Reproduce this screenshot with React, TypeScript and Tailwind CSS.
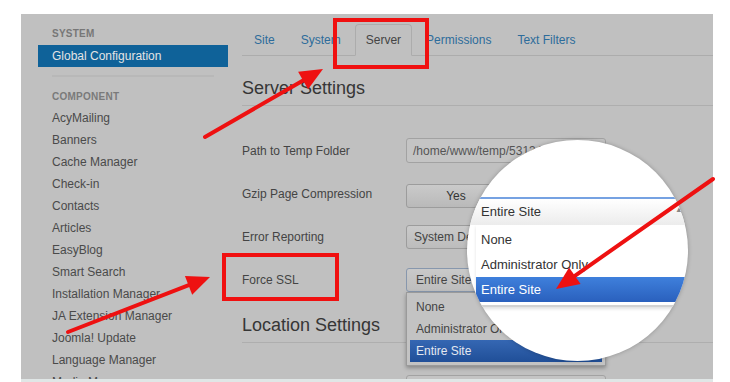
const components = [
  'AcyMailing',
  'Banners',
  'Cache Manager',
  'Check-in',
  'Contacts',
  'Articles',
  'EasyBlog',
  'Smart Search',
  'Installation Manager',
  'JA Extension Manager',
  'Joomla! Update',
  'Language Manager',
  'Media Manager',
]

const tabs = ['Site', 'System', 'Server', 'Permissions', 'Text Filters']

function Sidebar() {
  return (
    <div className="w-[190px] ml-[17px] pt-[14px] shrink-0">
      <div className="ml-[14px] h-[12px] text-[10px] leading-[12px] font-bold text-[#777] tracking-wide">SYSTEM</div>
      <div className="mt-[5px] h-[22px] pl-[14px] text-[12px] leading-[22px] bg-[#0f6299] text-[#e4e4e4]">
        Global Configuration
      </div>
      <div className="mt-[8px] ml-[14px] w-[162px] h-[2px] bg-[#b8b8b8]" />
      <div className="mt-[14px] ml-[14px] h-[12px] text-[10px] leading-[12px] font-bold text-[#7a7a7a] tracking-wide">
        COMPONENT
      </div>
      <ul className="mt-[4px]">
        {components.map((c) => (
          <li key={c} className="h-[22px] pl-[14px] text-[12px] leading-[22px] text-[#4a4a4a]">
            {c}
          </li>
        ))}
      </ul>
    </div>
  )
}

function Heading({ children, className = '' }) {
  return (
    <h2 className={`pb-[5px] border-b border-[#aeaeae] text-[18px] leading-[24px] text-[#363636] ${className}`}>
      {children}
    </h2>
  )
}

function Row({ label, children }) {
  return (
    <div className="h-[43px] flex items-center">
      <div className="w-[164px] shrink-0 text-[12px] text-[#444]">{label}</div>
      {children}
    </div>
  )
}

function Main() {
  return (
    <div className="ml-[14px] flex-1 min-w-0 pt-[10px]">
      <div className="flex items-end h-[32px] border-b border-[#acacac]">
        {tabs.map((t) =>
          t === 'Server' ? (
            <div
              key={t}
              className="h-[32px] -mb-px px-[10px] mr-[2px] flex items-center text-[12px] text-[#444] border border-[#acacac] border-b-[#c0c0c0] rounded-t-[4px] bg-[#c0c0c0]"
            >
              {t}
            </div>
          ) : (
            <div key={t} className="h-[31px] px-3 mr-[2px] flex items-center text-[12px] text-[#2d6c9b]">
              {t}
            </div>
          )
        )}
      </div>

      <Heading className="mt-[20px]">Server Settings</Heading>

      <div className="mt-[23px]">
        <Row label="Path to Temp Folder">
          <div className="w-[200px] h-[25px] px-[6px] flex items-center border border-[#a2a2a2] rounded-[3px] bg-[#c4c4c4] text-[12px] text-[#555] overflow-hidden whitespace-nowrap">
            /home/www/temp/531346a8c2
          </div>
        </Row>
        <Row label="Gzip Page Compression">
          <div className="flex mt-[4px]">
            <div className="w-[100px] h-[24px] flex items-center justify-center border border-[#9c9c9c] rounded-l-[3px] bg-gradient-to-b from-[#cacaca] to-[#b9b9b9] text-[12px] text-[#333]">
              Yes
            </div>
            <div className="w-[100px] h-[24px] flex items-center justify-center border border-l-0 border-[#9c9c9c] rounded-r-[3px] bg-gradient-to-b from-[#cacaca] to-[#b9b9b9] text-[12px] text-[#333]">
              No
            </div>
          </div>
        </Row>
        <Row label="Error Reporting">
          <div className="w-[200px] h-[24px] pl-[7px] flex items-center border border-[#9c9c9c] rounded-[3px] bg-gradient-to-b from-[#cacaca] to-[#bcbcbc] text-[12px] text-[#444]">
            System Default
          </div>
        </Row>
        <Row label="Force SSL">
          <div className="relative">
            <div className="w-[200px] h-[24px] pl-[9px] flex items-center border border-[#8797ad] rounded-[3px] bg-gradient-to-b from-[#c9c9c9] to-[#bdbdbd] text-[12px] text-[#444]">
              Entire Site
            </div>
            <div className="absolute left-0 top-full z-10 w-[200px] px-[3px] py-[3px] border border-[#9a9a9a] bg-[#c3c3c3] shadow-[0_2px_4px_rgba(0,0,0,0.3)] text-[12px]">
              <div className="h-[22px] leading-[22px] pl-[6px] text-[#444]">None</div>
              <div className="h-[22px] leading-[22px] pl-[6px] text-[#444]">Administrator Only</div>
              <div className="h-[22px] leading-[22px] pl-[6px] text-[#e4e8f0] bg-gradient-to-b from-[#3567b3] to-[#204f98]">
                Entire Site
              </div>
            </div>
          </div>
        </Row>
      </div>

      <Heading className="mt-[12px]">Location Settings</Heading>

      <div className="mt-[32px] flex">
        <div className="w-[164px] shrink-0" />
        <div className="w-[200px] h-[25px] border border-[#a2a2a2] rounded-[3px] bg-[#c4c4c4]" />
      </div>
    </div>
  )
}

function Magnifier() {
  return (
    <div className="absolute left-[467px] top-[140px] w-[221px] h-[221px] rounded-full bg-white overflow-hidden shadow-[0_0_4px_rgba(0,0,0,0.25)] z-20">
      <div className="absolute left-[3px] top-[57px] w-[260px] text-[13px]">
        <div className="relative h-[28px] pl-[11px] flex items-center border-t-2 border-[#76a2e2] bg-gradient-to-b from-white to-[#ececec] text-[#333]">
          Entire Site
          <span className="absolute left-[205px] top-[5px] text-[8px] text-[#888]">▲</span>
        </div>
        <div className="ml-[6px] pt-[2px] pb-[3px] border-b-2 border-[#d2d2d2] shadow-[0_2px_3px_rgba(0,0,0,0.12)]">
          <div className="h-[25px] leading-[25px] pl-[5px] text-[#333]">None</div>
          <div className="h-[25px] leading-[25px] pl-[5px] text-[#333]">Administrator Only</div>
          <div className="h-[25px] leading-[25px] pl-[5px] text-white bg-gradient-to-b from-[#3f80dc] to-[#2a60bd]">
            Entire Site
          </div>
        </div>
      </div>
    </div>
  )
}

function Arrow({ x1, y1, x2, y2, w = 4 }) {
  const dx = x2 - x1
  const dy = y2 - y1
  const len = Math.hypot(dx, dy)
  const ux = dx / len
  const uy = dy / len
  const L = 23
  const W = 10
  const bx = x2 - ux * L
  const by = y2 - uy * L
  const points = `${x2},${y2} ${bx - uy * W},${by + ux * W} ${bx + uy * W},${by - ux * W}`
  return (
    <g>
      <line x1={x1} y1={y1} x2={bx + ux * 3} y2={by + uy * 3} stroke="#ee1111" strokeWidth={w} strokeLinecap="round" />
      <polygon points={points} fill="#ee1111" />
    </g>
  )
}

export default function App() {
  return (
    <div className="relative w-[730px] h-[382px] overflow-hidden bg-white font-['Liberation_Sans',Arial,sans-serif]">
      <div className="ml-[21px] pt-[14px] w-[692px]">
        <div className="flex h-[365px] overflow-hidden bg-[#c0c0c0]">
          <Sidebar />
          <Main />
        </div>
        <div className="h-[3px] bg-[#e0e6e6]" />
      </div>

      <Magnifier />

      <div className="absolute left-[333px] top-[18px] w-[96px] h-[51px] border-4 border-[#f01010] z-30" />
      <div className="absolute left-[222px] top-[253px] w-[117px] h-[48px] border-4 border-[#f01010] z-30" />

      <svg className="absolute inset-0 z-40 pointer-events-none" width="730" height="382" viewBox="0 0 730 382">
        <Arrow x1={205} y1={137} x2={323} y2={69} />
        <Arrow x1={68} y1={332} x2={210} y2={277} />
        <Arrow x1={713} y1={179} x2={556} y2={289} />
      </svg>
    </div>
  )
}
